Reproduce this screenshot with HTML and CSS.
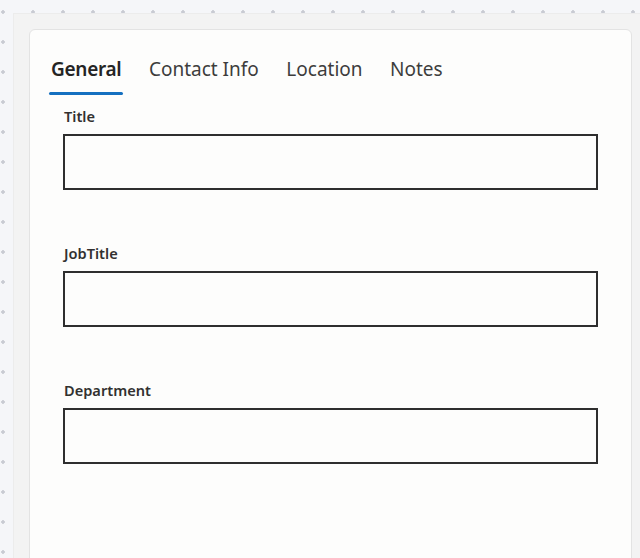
FILE: index.html
```html
<!DOCTYPE html>
<html lang="en">
<head>
    <meta charset="UTF-8">
    <meta name="viewport" content="width=device-width, initial-scale=1.0">
    <title>Contact Details</title>
    <link rel="stylesheet" href="styles.css">
</head>
<body>
    <div class="panel">
        <div class="card">
            <!-- Tabs -->
            <div class="tab-list">
                <button class="tab active">General</button>
                <button class="tab">Contact Info</button>
                <button class="tab">Location</button>
                <button class="tab">Notes</button>
            </div>

            <!-- General fields -->
            <div class="fields">
                <div class="field">
                    <label for="title">Title</label>
                    <input type="text" id="title">
                </div>
                <div class="field">
                    <label for="jobTitle">JobTitle</label>
                    <input type="text" id="jobTitle">
                </div>
                <div class="field">
                    <label for="department">Department</label>
                    <input type="text" id="department">
                </div>
            </div>
        </div>
    </div>
</body>
</html>
```

FILE: styles.css
```css
html, body {
    height: 100%;
}

body {
    margin: 0;
    font-family: 'Noto Sans', 'Open Sans', Arial, sans-serif;
    background-color: #f5f6f9;
    background-image: radial-gradient(circle, #c9cbd3 1.5px, transparent 2px);
    background-size: 30px 30px;
    background-position: -12px -3px;
    overflow: hidden;
}

.panel {
    margin: 13px 0 0 13px;
    padding: 16px 8px 0 16px;
    height: 100%;
    background-color: #f3f3f3;
    border-top: 1px solid #ececec;
    border-left: 1px solid #ececec;
    box-sizing: border-box;
}

.card {
    height: 100%;
    margin-top: -1px;
    margin-left: -1px;
    background-color: #fdfdfc;
    border: 1px solid #e3e3e3;
    border-radius: 6px;
    box-sizing: border-box;
}

.tab-list {
    display: flex;
    gap: 23.5px;
    padding: 25px 0 0 19px;
}

.tab {
    font-family: inherit;
    font-size: 19px;
    line-height: 28px;
    color: #3d3d3d;
    background: none;
    border: none;
    padding: 0 2px 12px;
    cursor: pointer;
    position: relative;
}

.tab.active {
    color: #242424;
    font-weight: 600;
    letter-spacing: -0.3px;
}

.tab.active::after {
    content: '';
    position: absolute;
    left: 0;
    right: 0;
    bottom: 0;
    height: 3px;
    border-radius: 2px;
    background-color: #1570c0;
}

.fields {
    display: flex;
    flex-direction: column;
    gap: 53px;
    padding: 11px 33px 0 33px;
}

.field label {
    display: block;
    font-family: 'Noto Sans', 'Open Sans', Arial, sans-serif;
    font-size: 14.6px;
    font-weight: 600;
    line-height: 20px;
    color: #323130;
    margin: 0 0 8px;
    padding-left: 1px;
}

.field input {
    display: block;
    width: 100%;
    height: 56px;
    box-sizing: border-box;
    border: 2px solid #2e2e2e;
    background-color: #fdfdfc;
    font-family: inherit;
    font-size: 14px;
    padding: 0 10px;
}
```
